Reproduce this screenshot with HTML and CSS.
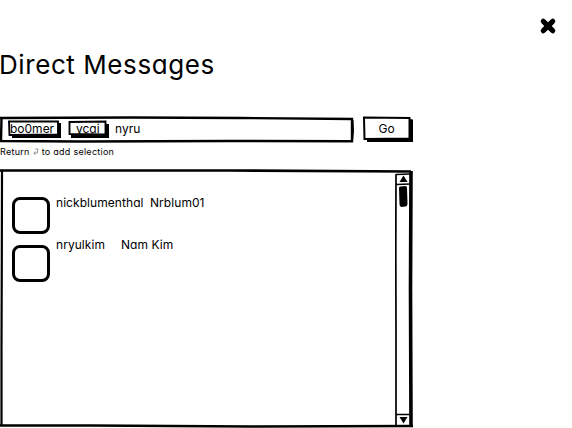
FILE: index.html
```html
<!DOCTYPE html>
<html lang="en">
<head>
<meta charset="utf-8">
<title>Direct Messages</title>
<link rel="stylesheet" href="styles.css">
</head>
<body>
<main class="dialog">
  <header class="header">
    <h1 class="title">Direct Messages</h1>
    <button class="close" aria-label="Close"><svg width="18" height="18" viewBox="0 0 18 18"><path d="M4.500 4.500 13.500 13.500M13.500 4.500 4.500 13.500" stroke="#000" stroke-width="5"/><path d="M4.200 4.200 13.800 13.800M13.800 4.200 4.200 13.800" stroke="#000" stroke-width="5" stroke-linecap="round"/></svg></button>
  </header>
  <form class="search">
    <div class="field">
      <svg class="sketch" width="355" height="28" viewBox="0 0 355 28"><path d="M0 2 130 1.500 240 2 352 3 352 25.200 230 25 80 25.500 1 25 1.500 2" fill="none" stroke="#000" stroke-width="2.400"/><path d="M353 4 353.500 15 352.500 25" fill="none" stroke="#000" stroke-width="1"/></svg>
      <span class="chip chip-first"><svg class="sketch" width="54" height="20" viewBox="0 0 54 20"><path d="M4 15H50V3H53V18H4Z"/><path d="M1 1.500 50 1.500 50 14.500 1.500 15Z" fill="#fff" stroke="#000" stroke-width="1.900"/></svg><span class="label">bo0mer</span></span>
      <span class="chip chip-second"><svg class="sketch" width="42" height="20" viewBox="0 0 42 20"><path d="M3 14H37V4H41V18H3Z"/><path d="M1.500 2 37.500 1.500 37.500 14.500 1.500 14Z" fill="#fff" stroke="#000" stroke-width="1.900"/></svg><span class="label">ycai</span></span>
      <span class="query">nyru</span>
    </div>
    <button class="go" type="button"><svg class="sketch" width="51" height="28" viewBox="0 0 51 28"><path d="M4 22H46V3L50 3.500V26H4Z"/><path d="M1 1.500 46.500 2 46.500 22.500 1.500 23Z" fill="#fff" stroke="#000" stroke-width="2"/></svg><span class="label">Go</span></button>
  </form>
  <p class="hint"><span>Return</span><svg class="enter" width="6" height="8" viewBox="0 0 6 8"><path d="M2.500 1H5L4.200 5H1M2.500 3.500.7 5.200 2.300 6.800" fill="none" stroke="#777" stroke-width=".8"/></svg><span>to add selection</span></p>
  <section class="list">
    <svg class="sketch" width="414" height="259" viewBox="0 0 414 259"><path d="M0 1.500 75 1.500 230 1.500 411 2.500" fill="none" stroke="#000" stroke-width="2.600"/><path d="M2 1 1.800 90 1.500 180 1.500 257" fill="none" stroke="#000" stroke-width="2.200"/><path d="M0 256.500 90 256.500 250 257.500 413 257" fill="none" stroke="#000" stroke-width="2.600"/><path d="M411 2 410.500 120 411 257" fill="none" stroke="#000" stroke-width="3.600"/></svg>
    <ul class="people">
      <li class="person"><span class="avatar"></span><span class="user t-nick">nickblumenthal</span><span class="name">Nrblum01</span></li>
      <li class="person"><span class="avatar"></span><span class="user t-nryul">nryulkim</span><span class="name">Nam Kim</span></li>
    </ul>
    <div class="scroll"><svg width="17" height="256" viewBox="0 0 17 256"><path d="M1 2 .8 80 1 160 1 254M1 2.500 15 2M1 12.500 15 12M1 242.500H15" fill="none" stroke="#000" stroke-width="1.700"/><path d="M8.500 3.500 12.500 10H4.500Z"/><path d="M4.500 245H12.500L8.500 251.500Z"/><path d="M4 16Q4 14 6 14.500L10 14Q12 14 12 16L12.500 32Q12 35 10 34.500L6 35Q4.500 34 4.500 32Z"/></svg></div>
  </section>
</main>
</body>
</html>
```
FILE: styles.css
```css
* { box-sizing: border-box; }
body { margin: 0; background: #fff; color: #000; font-family: Inter, sans-serif; font-weight: 420; font-feature-settings: "cv11" 1, "calt" 0; overflow: hidden; }
.dialog { width: 572px; height: 428px; display: flex; flex-direction: column; }
.header { height: 116px; flex: none; display: flex; justify-content: space-between; align-items: flex-start; padding: 17px 15px 0 0; }
.title { margin: 32px 0 0 -1px; font-size: 26px; line-height: 31px; font-weight: 430; letter-spacing: .58px; white-space: nowrap; }
button { border: 0; padding: 0; background: none; color: inherit; font: inherit; font-feature-settings: inherit; }
.close { width: 18px; height: 18px; }
svg { display: block; }
.sketch { position: absolute; left: 0; top: 0; }
.search { display: flex; gap: 8px; height: 28px; flex: none; }
.field { position: relative; width: 355px; height: 28px; display: flex; padding: 4px 0 0 8px; font-size: 12px; line-height: 17px; }
.chip { position: relative; height: 20px; }
.chip-first { width: 54px; margin-right: 6px; padding-left: 2px; }
.chip-second { width: 42px; margin-right: 4px; padding-left: 8px; }
.label { position: relative; }
.query { padding-left: 1px; }
.go { position: relative; width: 51px; height: 28px; padding: 0 4px 4px 0; font-size: 12px; }
.hint { margin: 2px 0 0; height: 12px; flex: none; display: flex; font-size: 9px; line-height: 12px; letter-spacing: .27px; white-space: nowrap; }
.enter { margin: 2px 3px 0 3px; }
.list { position: relative; margin-top: 11px; width: 414px; height: 259px; flex: none; display: flex; justify-content: space-between; padding: 2px 2px 0 12px; }
.people { list-style: none; margin: 26px 0 0; padding: 0; font-size: 12px; line-height: 16px; letter-spacing: .06px; }
.person { display: flex; height: 48px; white-space: nowrap; }
.avatar { width: 38px; height: 37px; border: 3px solid #000; border-radius: 8px; margin-right: 6px; }
.user, .name { margin-top: -2px; }
.person + .person .user, .person + .person .name { margin-top: -8px; }
.t-nick { width: 94px; }
.t-nryul { width: 65px; }
.scroll { width: 17px; margin-top: 1px; }
```
